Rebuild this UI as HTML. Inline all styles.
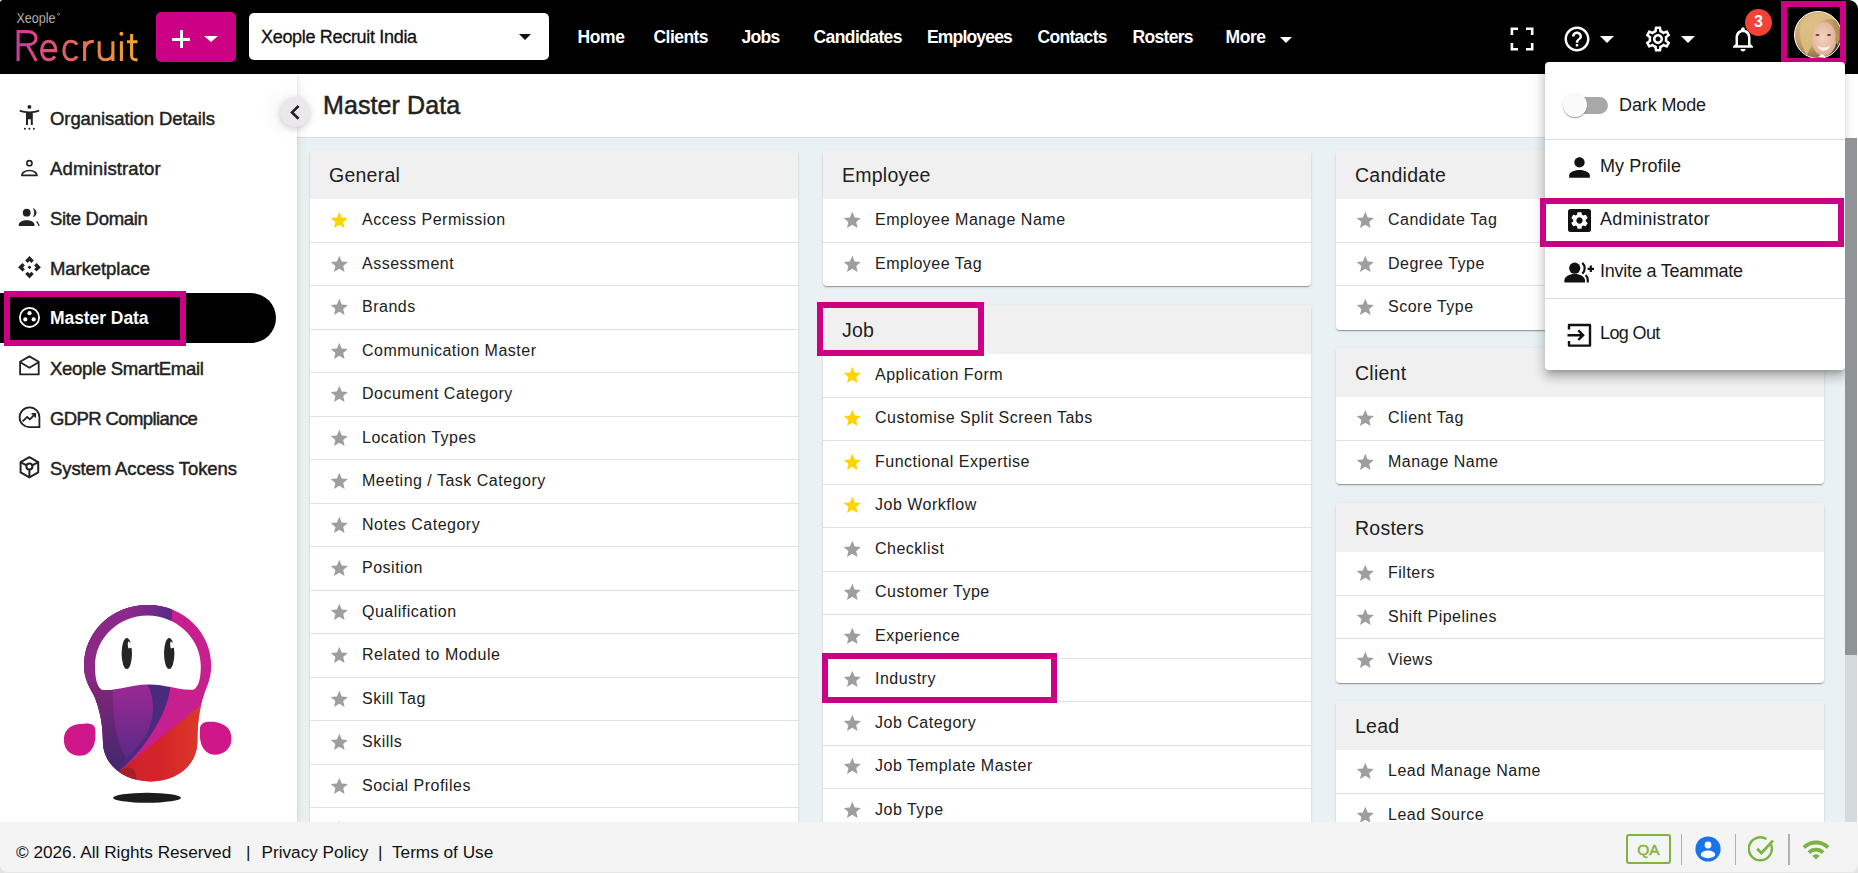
<!DOCTYPE html>
<html><head><meta charset="utf-8">
<style>
*{box-sizing:border-box}
html,body{margin:0;padding:0}
body{width:1858px;height:873px;overflow:hidden;position:relative;background:#fff;font-family:"Liberation Sans",sans-serif;color:#212121}
.a{position:absolute}
.t{position:absolute;white-space:nowrap}
#hdr{left:0;top:0;width:1858px;height:74px;background:#000;border-radius:3px 9px 0 0}
.nav{position:absolute;top:29px;line-height:17.5px;font-size:17.5px;font-weight:700;color:#fff;white-space:nowrap}
.tri{position:absolute;width:0;height:0;border-left:7px solid transparent;border-right:7px solid transparent;border-top:7px solid #fff}
#side{left:0;top:74px;width:297px;height:748px;background:#fff}
.si{position:absolute;left:50px;font-size:18.5px;line-height:18.5px;color:#222;white-space:nowrap;-webkit-text-stroke:0.45px #222}
.sic{position:absolute;left:17px;width:24px;height:24px}
#content{left:297px;top:74px;width:1548px;height:748px;background:#e9f1f5}
#title{left:297px;top:74px;width:1548px;height:64px;background:#fff;border-bottom:1px solid #d6dde3}
.card{position:absolute;background:#fff;border-radius:4px;overflow:hidden;box-shadow:0 2px 1px -1px rgba(0,0,0,.2),0 1px 1px 0 rgba(0,0,0,.14),0 1px 3px 0 rgba(0,0,0,.12)}
.ch{position:absolute;left:0;top:0;width:100%;height:49px;background:#f0f0f0;padding-left:19px;font-size:19.5px;line-height:51px;color:#212121;letter-spacing:0.25px}
.row{position:absolute;left:0;width:100%;height:43.5px}
.star{position:absolute;left:19px;top:11px;width:20.6px;height:20.6px}
.dv{position:absolute;left:0;top:-0.75px;width:100%;height:1px;background:#e0e0e0}
.rt{position:absolute;left:52px;top:1px;line-height:40px;font-size:16px;letter-spacing:0.5px;color:#212121;white-space:nowrap}
#foot{left:0;top:822px;width:1858px;height:51px;background:#f4f4f4;border-radius:0 0 8px 8px}
.ft{position:absolute;top:844px;font-size:17.2px;line-height:17.2px;color:#111;white-space:nowrap}
#menu{left:1545px;top:62px;width:300px;height:308px;background:#fff;border-radius:4px;box-shadow:0 5px 5px -3px rgba(0,0,0,.2),0 8px 10px 1px rgba(0,0,0,.14),0 3px 14px 2px rgba(0,0,0,.12)}
.mi{position:absolute;font-size:18px;line-height:18px;color:#1a1a1a;white-space:nowrap}
.pink{position:absolute;border:6px solid #cc0085}
</style></head><body>

<!-- content area -->
<div id="content" class="a"></div>
<div id="title" class="a"></div>
<div class="t" style="left:323px;top:92.9px;font-size:25px;line-height:25px;color:#222;-webkit-text-stroke:0.5px #222;letter-spacing:0.1px">Master Data</div>

<div class="card" style="left:310px;top:150px;width:488px;height:701.5px"><div class="ch">General</div><div class="row" style="top:49.0px"><svg class="star" viewBox="0 0 24 24"><path fill="#ffd400" d="M12 17.27L18.18 21l-1.64-7.03L22 9.24l-7.19-.61L12 2 9.19 8.63 2 9.24l5.46 4.73L5.82 21z"/></svg><span class="rt">Access Permission</span></div><div class="row" style="top:92.5px"><div class="dv"></div><svg class="star" viewBox="0 0 24 24"><path fill="#9e9e9e" d="M12 17.27L18.18 21l-1.64-7.03L22 9.24l-7.19-.61L12 2 9.19 8.63 2 9.24l5.46 4.73L5.82 21z"/></svg><span class="rt">Assessment</span></div><div class="row" style="top:136.0px"><div class="dv"></div><svg class="star" viewBox="0 0 24 24"><path fill="#9e9e9e" d="M12 17.27L18.18 21l-1.64-7.03L22 9.24l-7.19-.61L12 2 9.19 8.63 2 9.24l5.46 4.73L5.82 21z"/></svg><span class="rt">Brands</span></div><div class="row" style="top:179.5px"><div class="dv"></div><svg class="star" viewBox="0 0 24 24"><path fill="#9e9e9e" d="M12 17.27L18.18 21l-1.64-7.03L22 9.24l-7.19-.61L12 2 9.19 8.63 2 9.24l5.46 4.73L5.82 21z"/></svg><span class="rt">Communication Master</span></div><div class="row" style="top:223.0px"><div class="dv"></div><svg class="star" viewBox="0 0 24 24"><path fill="#9e9e9e" d="M12 17.27L18.18 21l-1.64-7.03L22 9.24l-7.19-.61L12 2 9.19 8.63 2 9.24l5.46 4.73L5.82 21z"/></svg><span class="rt">Document Category</span></div><div class="row" style="top:266.5px"><div class="dv"></div><svg class="star" viewBox="0 0 24 24"><path fill="#9e9e9e" d="M12 17.27L18.18 21l-1.64-7.03L22 9.24l-7.19-.61L12 2 9.19 8.63 2 9.24l5.46 4.73L5.82 21z"/></svg><span class="rt">Location Types</span></div><div class="row" style="top:310.0px"><div class="dv"></div><svg class="star" viewBox="0 0 24 24"><path fill="#9e9e9e" d="M12 17.27L18.18 21l-1.64-7.03L22 9.24l-7.19-.61L12 2 9.19 8.63 2 9.24l5.46 4.73L5.82 21z"/></svg><span class="rt">Meeting / Task Category</span></div><div class="row" style="top:353.5px"><div class="dv"></div><svg class="star" viewBox="0 0 24 24"><path fill="#9e9e9e" d="M12 17.27L18.18 21l-1.64-7.03L22 9.24l-7.19-.61L12 2 9.19 8.63 2 9.24l5.46 4.73L5.82 21z"/></svg><span class="rt">Notes Category</span></div><div class="row" style="top:397.0px"><div class="dv"></div><svg class="star" viewBox="0 0 24 24"><path fill="#9e9e9e" d="M12 17.27L18.18 21l-1.64-7.03L22 9.24l-7.19-.61L12 2 9.19 8.63 2 9.24l5.46 4.73L5.82 21z"/></svg><span class="rt">Position</span></div><div class="row" style="top:440.5px"><div class="dv"></div><svg class="star" viewBox="0 0 24 24"><path fill="#9e9e9e" d="M12 17.27L18.18 21l-1.64-7.03L22 9.24l-7.19-.61L12 2 9.19 8.63 2 9.24l5.46 4.73L5.82 21z"/></svg><span class="rt">Qualification</span></div><div class="row" style="top:484.0px"><div class="dv"></div><svg class="star" viewBox="0 0 24 24"><path fill="#9e9e9e" d="M12 17.27L18.18 21l-1.64-7.03L22 9.24l-7.19-.61L12 2 9.19 8.63 2 9.24l5.46 4.73L5.82 21z"/></svg><span class="rt">Related to Module</span></div><div class="row" style="top:527.5px"><div class="dv"></div><svg class="star" viewBox="0 0 24 24"><path fill="#9e9e9e" d="M12 17.27L18.18 21l-1.64-7.03L22 9.24l-7.19-.61L12 2 9.19 8.63 2 9.24l5.46 4.73L5.82 21z"/></svg><span class="rt">Skill Tag</span></div><div class="row" style="top:571.0px"><div class="dv"></div><svg class="star" viewBox="0 0 24 24"><path fill="#9e9e9e" d="M12 17.27L18.18 21l-1.64-7.03L22 9.24l-7.19-.61L12 2 9.19 8.63 2 9.24l5.46 4.73L5.82 21z"/></svg><span class="rt">Skills</span></div><div class="row" style="top:614.5px"><div class="dv"></div><svg class="star" viewBox="0 0 24 24"><path fill="#9e9e9e" d="M12 17.27L18.18 21l-1.64-7.03L22 9.24l-7.19-.61L12 2 9.19 8.63 2 9.24l5.46 4.73L5.82 21z"/></svg><span class="rt">Social Profiles</span></div><div class="row" style="top:658.0px"><div class="dv"></div><svg class="star" viewBox="0 0 24 24"><path fill="#9e9e9e" d="M12 17.27L18.18 21l-1.64-7.03L22 9.24l-7.19-.61L12 2 9.19 8.63 2 9.24l5.46 4.73L5.82 21z"/></svg><span class="rt">Source</span></div></div><div class="card" style="left:823px;top:150px;width:488px;height:136.0px"><div class="ch">Employee</div><div class="row" style="top:49.0px"><svg class="star" viewBox="0 0 24 24"><path fill="#9e9e9e" d="M12 17.27L18.18 21l-1.64-7.03L22 9.24l-7.19-.61L12 2 9.19 8.63 2 9.24l5.46 4.73L5.82 21z"/></svg><span class="rt">Employee Manage Name</span></div><div class="row" style="top:92.5px"><div class="dv"></div><svg class="star" viewBox="0 0 24 24"><path fill="#9e9e9e" d="M12 17.27L18.18 21l-1.64-7.03L22 9.24l-7.19-.61L12 2 9.19 8.63 2 9.24l5.46 4.73L5.82 21z"/></svg><span class="rt">Employee Tag</span></div></div><div class="card" style="left:823px;top:304.75px;width:488px;height:571.0px"><div class="ch">Job</div><div class="row" style="top:49.0px"><svg class="star" viewBox="0 0 24 24"><path fill="#ffd400" d="M12 17.27L18.18 21l-1.64-7.03L22 9.24l-7.19-.61L12 2 9.19 8.63 2 9.24l5.46 4.73L5.82 21z"/></svg><span class="rt">Application Form</span></div><div class="row" style="top:92.5px"><div class="dv"></div><svg class="star" viewBox="0 0 24 24"><path fill="#ffd400" d="M12 17.27L18.18 21l-1.64-7.03L22 9.24l-7.19-.61L12 2 9.19 8.63 2 9.24l5.46 4.73L5.82 21z"/></svg><span class="rt">Customise Split Screen Tabs</span></div><div class="row" style="top:136.0px"><div class="dv"></div><svg class="star" viewBox="0 0 24 24"><path fill="#ffd400" d="M12 17.27L18.18 21l-1.64-7.03L22 9.24l-7.19-.61L12 2 9.19 8.63 2 9.24l5.46 4.73L5.82 21z"/></svg><span class="rt">Functional Expertise</span></div><div class="row" style="top:179.5px"><div class="dv"></div><svg class="star" viewBox="0 0 24 24"><path fill="#ffd400" d="M12 17.27L18.18 21l-1.64-7.03L22 9.24l-7.19-.61L12 2 9.19 8.63 2 9.24l5.46 4.73L5.82 21z"/></svg><span class="rt">Job Workflow</span></div><div class="row" style="top:223.0px"><div class="dv"></div><svg class="star" viewBox="0 0 24 24"><path fill="#9e9e9e" d="M12 17.27L18.18 21l-1.64-7.03L22 9.24l-7.19-.61L12 2 9.19 8.63 2 9.24l5.46 4.73L5.82 21z"/></svg><span class="rt">Checklist</span></div><div class="row" style="top:266.5px"><div class="dv"></div><svg class="star" viewBox="0 0 24 24"><path fill="#9e9e9e" d="M12 17.27L18.18 21l-1.64-7.03L22 9.24l-7.19-.61L12 2 9.19 8.63 2 9.24l5.46 4.73L5.82 21z"/></svg><span class="rt">Customer Type</span></div><div class="row" style="top:310.0px"><div class="dv"></div><svg class="star" viewBox="0 0 24 24"><path fill="#9e9e9e" d="M12 17.27L18.18 21l-1.64-7.03L22 9.24l-7.19-.61L12 2 9.19 8.63 2 9.24l5.46 4.73L5.82 21z"/></svg><span class="rt">Experience</span></div><div class="row" style="top:353.5px"><div class="dv"></div><svg class="star" viewBox="0 0 24 24"><path fill="#9e9e9e" d="M12 17.27L18.18 21l-1.64-7.03L22 9.24l-7.19-.61L12 2 9.19 8.63 2 9.24l5.46 4.73L5.82 21z"/></svg><span class="rt">Industry</span></div><div class="row" style="top:397.0px"><div class="dv"></div><svg class="star" viewBox="0 0 24 24"><path fill="#9e9e9e" d="M12 17.27L18.18 21l-1.64-7.03L22 9.24l-7.19-.61L12 2 9.19 8.63 2 9.24l5.46 4.73L5.82 21z"/></svg><span class="rt">Job Category</span></div><div class="row" style="top:440.5px"><div class="dv"></div><svg class="star" viewBox="0 0 24 24"><path fill="#9e9e9e" d="M12 17.27L18.18 21l-1.64-7.03L22 9.24l-7.19-.61L12 2 9.19 8.63 2 9.24l5.46 4.73L5.82 21z"/></svg><span class="rt">Job Template Master</span></div><div class="row" style="top:484.0px"><div class="dv"></div><svg class="star" viewBox="0 0 24 24"><path fill="#9e9e9e" d="M12 17.27L18.18 21l-1.64-7.03L22 9.24l-7.19-.61L12 2 9.19 8.63 2 9.24l5.46 4.73L5.82 21z"/></svg><span class="rt">Job Type</span></div><div class="row" style="top:527.5px"><div class="dv"></div><svg class="star" viewBox="0 0 24 24"><path fill="#9e9e9e" d="M12 17.27L18.18 21l-1.64-7.03L22 9.24l-7.19-.61L12 2 9.19 8.63 2 9.24l5.46 4.73L5.82 21z"/></svg><span class="rt">Rejection Reason</span></div></div><div class="card" style="left:1336px;top:150px;width:488px;height:179.5px"><div class="ch">Candidate</div><div class="row" style="top:49.0px"><svg class="star" viewBox="0 0 24 24"><path fill="#9e9e9e" d="M12 17.27L18.18 21l-1.64-7.03L22 9.24l-7.19-.61L12 2 9.19 8.63 2 9.24l5.46 4.73L5.82 21z"/></svg><span class="rt">Candidate Tag</span></div><div class="row" style="top:92.5px"><div class="dv"></div><svg class="star" viewBox="0 0 24 24"><path fill="#9e9e9e" d="M12 17.27L18.18 21l-1.64-7.03L22 9.24l-7.19-.61L12 2 9.19 8.63 2 9.24l5.46 4.73L5.82 21z"/></svg><span class="rt">Degree Type</span></div><div class="row" style="top:136.0px"><div class="dv"></div><svg class="star" viewBox="0 0 24 24"><path fill="#9e9e9e" d="M12 17.27L18.18 21l-1.64-7.03L22 9.24l-7.19-.61L12 2 9.19 8.63 2 9.24l5.46 4.73L5.82 21z"/></svg><span class="rt">Score Type</span></div></div><div class="card" style="left:1336px;top:348.25px;width:488px;height:136.0px"><div class="ch">Client</div><div class="row" style="top:49.0px"><svg class="star" viewBox="0 0 24 24"><path fill="#9e9e9e" d="M12 17.27L18.18 21l-1.64-7.03L22 9.24l-7.19-.61L12 2 9.19 8.63 2 9.24l5.46 4.73L5.82 21z"/></svg><span class="rt">Client Tag</span></div><div class="row" style="top:92.5px"><div class="dv"></div><svg class="star" viewBox="0 0 24 24"><path fill="#9e9e9e" d="M12 17.27L18.18 21l-1.64-7.03L22 9.24l-7.19-.61L12 2 9.19 8.63 2 9.24l5.46 4.73L5.82 21z"/></svg><span class="rt">Manage Name</span></div></div><div class="card" style="left:1336px;top:503.0px;width:488px;height:179.5px"><div class="ch">Rosters</div><div class="row" style="top:49.0px"><svg class="star" viewBox="0 0 24 24"><path fill="#9e9e9e" d="M12 17.27L18.18 21l-1.64-7.03L22 9.24l-7.19-.61L12 2 9.19 8.63 2 9.24l5.46 4.73L5.82 21z"/></svg><span class="rt">Filters</span></div><div class="row" style="top:92.5px"><div class="dv"></div><svg class="star" viewBox="0 0 24 24"><path fill="#9e9e9e" d="M12 17.27L18.18 21l-1.64-7.03L22 9.24l-7.19-.61L12 2 9.19 8.63 2 9.24l5.46 4.73L5.82 21z"/></svg><span class="rt">Shift Pipelines</span></div><div class="row" style="top:136.0px"><div class="dv"></div><svg class="star" viewBox="0 0 24 24"><path fill="#9e9e9e" d="M12 17.27L18.18 21l-1.64-7.03L22 9.24l-7.19-.61L12 2 9.19 8.63 2 9.24l5.46 4.73L5.82 21z"/></svg><span class="rt">Views</span></div></div><div class="card" style="left:1336px;top:701.25px;width:488px;height:179.5px"><div class="ch">Lead</div><div class="row" style="top:49.0px"><svg class="star" viewBox="0 0 24 24"><path fill="#9e9e9e" d="M12 17.27L18.18 21l-1.64-7.03L22 9.24l-7.19-.61L12 2 9.19 8.63 2 9.24l5.46 4.73L5.82 21z"/></svg><span class="rt">Lead Manage Name</span></div><div class="row" style="top:92.5px"><div class="dv"></div><svg class="star" viewBox="0 0 24 24"><path fill="#9e9e9e" d="M12 17.27L18.18 21l-1.64-7.03L22 9.24l-7.19-.61L12 2 9.19 8.63 2 9.24l5.46 4.73L5.82 21z"/></svg><span class="rt">Lead Source</span></div><div class="row" style="top:136.0px"><div class="dv"></div><svg class="star" viewBox="0 0 24 24"><path fill="#9e9e9e" d="M12 17.27L18.18 21l-1.64-7.03L22 9.24l-7.19-.61L12 2 9.19 8.63 2 9.24l5.46 4.73L5.82 21z"/></svg><span class="rt">Lead Status</span></div></div>
<div class="pink" style="left:817px;top:302px;width:167px;height:54px"></div>
<div class="pink" style="left:822px;top:653px;width:235px;height:50px"></div>

<!-- sidebar -->
<div id="side" class="a" style="box-shadow:1px 0 3px rgba(0,0,0,.07),3px 0 10px rgba(0,0,0,.05)"></div>
<!-- collapse button -->
<div class="a" style="left:280px;top:97px;width:30px;height:30px;border-radius:50%;background:#ebe8ec;box-shadow:0 2px 6px rgba(0,0,0,.18),-6px 0 22px rgba(0,0,0,.06)"></div>
<svg class="a" style="left:280px;top:97px" width="30" height="30" viewBox="0 0 30 30"><path d="M18.6 9L12 15.4l6.6 6.4" fill="none" stroke="#222" stroke-width="2.6"/></svg>

<div class="si" style="top:109.5px;letter-spacing:-0.08px">Organisation Details</div>
<div class="si" style="top:159.5px;letter-spacing:0.14px">Administrator</div>
<div class="si" style="top:209.5px;letter-spacing:-0.288px">Site Domain</div>
<div class="si" style="top:259.5px;letter-spacing:-0.07px">Marketplace</div>
<div class="a" style="left:0;top:293px;width:276px;height:50px;background:#000;border-radius:0 25px 25px 0"></div>
<div class="si" style="top:310px;color:#fff;font-weight:700;font-size:17.5px;line-height:17.5px;-webkit-text-stroke:0;letter-spacing:-0.065px">Master Data</div>
<div class="si" style="top:359.5px;letter-spacing:-0.279px">Xeople SmartEmail</div>
<div class="si" style="top:409.5px;letter-spacing:-0.599px">GDPR Compliance</div>
<div class="si" style="top:459.5px;letter-spacing:-0.098px">System Access Tokens</div>
<div class="pink" style="left:4px;top:291px;width:182px;height:55px"></div>

<!-- mascot -->
<svg class="a" style="left:50px;top:590px" width="200" height="222" viewBox="0 0 200 222">
<defs>
<clipPath id="bc"><path d="M97.7 15.1C134 15.1 161.2 43 161.2 75.6C161.2 90 156 98 153.7 105.8C149 120 147.4 135 147.4 151.1C147.4 176 126 191.4 100.8 191.4C74 191.4 52.9 175 52.9 151.1C52.9 135 50 120 44.1 105.8C40 98 34 90 34 75.6C34 43 61 15.1 97.7 15.1Z"/></clipPath>
<linearGradient id="pg" x1="0" y1="0" x2="1" y2="0.3"><stop offset="0" stop-color="#8c2580"/><stop offset="0.6" stop-color="#8a2a8c"/><stop offset="1" stop-color="#5a2a88"/></linearGradient>
<linearGradient id="lfg" x1="0" y1="0" x2="0" y2="1"><stop offset="0" stop-color="#84267a"/><stop offset="1" stop-color="#34286a"/></linearGradient>
<linearGradient id="lng" x1="0" y1="0" x2="0" y2="1"><stop offset="0" stop-color="#9e2892"/><stop offset="1" stop-color="#5a2a88"/></linearGradient>
<linearGradient id="rg" x1="0" y1="0" x2="1" y2="0"><stop offset="0" stop-color="#c4202a"/><stop offset="0.5" stop-color="#d5242a"/><stop offset="1" stop-color="#e04a26"/></linearGradient>
</defs>
<g clip-path="url(#bc)">
<rect x="0" y="0" width="200" height="200" fill="#c71f8d"/>
<path d="M20 0H122.6C121 40 120 70 120 100C116 125 95 160 68.4 181.7L20 200Z" fill="#4a2a7e"/>
<path d="M20 0H122.6C121 40 120 70 120 93H20Z" fill="url(#pg)"/>
<path d="M20 92H65C62 130 66 150 76.2 166L68.4 181.7L20 200Z" fill="url(#lfg)"/>
<path d="M63 92H96C101 100 103 108 103 120C102 140 92 155 76.2 168C66 150 62 130 63 92Z" fill="url(#lng)"/>
<path d="M60 188.5L170 99.7H180V210H40Z" fill="url(#rg)"/>
<path d="M68.4 181.7C78 174 85 178 86 186C87 192 85 195 80 196L60 196Z" fill="#a81e28"/>
</g>
<path d="M97.5 25.6C126 25.6 150.8 48 150.8 76C150.8 88 149 96 144 99.5C130 101 115 94 98 94.5C80 95 66 101 52 100C47 97 45 88 45 76C45 48 69 25.6 97.5 25.6Z" fill="#fff"/>
<ellipse cx="76.8" cy="63.5" rx="5.2" ry="15.4" fill="#252525"/>
<ellipse cx="119.2" cy="63.5" rx="5.2" ry="15.4" fill="#252525"/>
<path d="M78.2 51.6C80.6 52.2 82.2 54.4 82.2 57.4L78.4 58.6C77.6 56 77.6 53.6 78.2 51.6Z" fill="#fff"/>
<path d="M120.6 51.6C123 52.2 124.6 54.4 124.6 57.4L120.8 58.6C120 56 120 53.6 120.6 51.6Z" fill="#fff"/>
<path d="M14 152C13 140 20 135 30 134C38 133 45 133 45.3 140C46 150 45 160 35 165C24 168 15 162 14 152Z" fill="#d0178a"/>
<path d="M181.4 150C182 138 175 134 165 132C157 131 150 132 149.9 139C149.5 149 150 159 160 164C171 167 181 160 181.4 150Z" fill="#d0178a"/>
<ellipse cx="97" cy="207.8" rx="34" ry="5" fill="#1c1c1c"/>
</svg>

<!-- sidebar icons -->
<svg class="a" style="left:17px;top:104px" width="25" height="28" viewBox="0 0 25 28" fill="#222">
<circle cx="12.4" cy="2.9" r="1.9"/>
<path d="M3 5.8c3 1.2 5.8 1.6 9.4 1.6s6.4-.4 9.4-1.6l.6 1.6c-2.2.9-4.4 1.4-6.6 1.6V21h-2V15.3h-2.8V21h-2V9c-2.2-.2-4.4-.7-6.6-1.6z"/>
<circle cx="7.9" cy="24.7" r="1"/><circle cx="12.4" cy="24.7" r="1"/><circle cx="16.9" cy="24.7" r="1"/>
</svg>
<svg class="a" style="left:17px;top:156px" width="25" height="24" viewBox="0 0 25 24" fill="none" stroke="#222" stroke-width="1.6">
<circle cx="12.4" cy="7.2" r="2.6"/>
<path d="M4.8 19.4c0-2.6 3.4-4.9 7.6-4.9s7.6 2.3 7.6 4.9z"/>
</svg>
<svg class="a" style="left:17px;top:204px" width="25" height="24" viewBox="0 0 25 24" fill="#222">
<circle cx="9.7" cy="8.7" r="3.9"/>
<path d="M1.8 21.9v-1.4c0-2.4 3.6-4.3 7.9-4.3s7.7 1.9 7.7 4.3v1.4z"/>
<path d="M16.6 4.6c1.5 1 2.5 2.5 2.5 4.1s-1 3.1-2.5 4.1c.6-1.2.9-2.6.9-4.1s-.3-2.9-.9-4.1z" fill="#222" stroke="#222" stroke-width="0.8"/>
<path d="M19.7 17.4l2.6 4.5" stroke="#222" stroke-width="1.2" fill="none"/>
</svg>
<svg class="a" style="left:17px;top:255px" width="25" height="25" viewBox="0 0 25 25" fill="#222">
<path d="M12.5 1.1L16.8 5.5L14.4 7.9L12.5 6L10.6 7.9L8.2 5.5Z M12.5 23.5L16.8 19.1L14.4 16.7L12.5 18.6L10.6 16.7L8.2 19.1Z M1.1 12.3L5.5 8L7.9 10.4L6 12.3L7.9 14.2L5.5 16.6Z M23.9 12.3L19.5 8L17.1 10.4L19 12.3L17.1 14.2L19.5 16.6Z M12.5 10.4L14.4 12.3L12.5 14.2L10.6 12.3Z"/>
</svg>
<svg class="a" style="left:17px;top:305px" width="25" height="25" viewBox="0 0 25 25">
<circle cx="12.5" cy="12.4" r="9.6" fill="none" stroke="#fff" stroke-width="1.8"/>
<circle cx="12.5" cy="8.2" r="2.1" fill="#fff"/><circle cx="8.3" cy="14.4" r="2.1" fill="#fff"/><circle cx="16.7" cy="14.4" r="2.1" fill="#fff"/>
</svg>
<svg class="a" style="left:17px;top:354px" width="25" height="24" viewBox="0 0 25 24" fill="none" stroke="#222" stroke-width="1.8" stroke-linejoin="round">
<path d="M3.1 7.7L12.4 2.4l9.3 5.3v12.7H3.1z"/><path d="M3.3 8.2l9.1 5.6 9.1-5.6"/>
</svg>
<svg class="a" style="left:17px;top:405px" width="25" height="25" viewBox="0 0 25 25" fill="none" stroke="#222" stroke-width="1.8">
<path d="M22.4 22.2h-9.6a9.9 9.9 0 1 1 9.6-9.6z"/>
<path d="M5.6 16.3l4.6-4.4 2.6 2.4 5.2-5.2" stroke-linejoin="round"/><path d="M14.6 8.8h3.6v3.6"/>
</svg>
<svg class="a" style="left:17px;top:455px" width="25" height="25" viewBox="0 0 25 25" fill="none" stroke="#222" stroke-width="2" stroke-linejoin="round">
<path d="M12.4 2.2l8.8 5v10.2l-8.8 5-8.8-5V7.2z"/>
<circle cx="12.4" cy="11.6" r="3"/><path d="M3.8 7.4l5.9 3M21 7.4l-5.9 3M12.4 14.6v7.4"/>
</svg>

<!-- header -->
<div id="hdr" class="a"></div>
<svg class="a" style="left:0;top:0" width="150" height="74" viewBox="0 0 150 74">
<defs><linearGradient id="lg" x1="16" y1="0" x2="138" y2="0" gradientUnits="userSpaceOnUse">
<stop offset="0" stop-color="#cf3a9c"/><stop offset="0.45" stop-color="#e2605f"/><stop offset="1" stop-color="#f3a928"/></linearGradient></defs>
<text x="16.5" y="23" font-family="Liberation Sans" font-size="14" fill="#d8d8d8" stroke="#000" stroke-width="0.25" textLength="39" lengthAdjust="spacingAndGlyphs">Xeople</text>
<circle cx="58.6" cy="14.2" r="1.1" fill="none" stroke="#cfcfcf" stroke-width="0.5"/>
<g fill="none" stroke="url(#lg)" stroke-width="3.1">
<path d="M18.1 61V31.6H27C33.3 31.6 36 34.6 36 38.2C36 41.8 33.3 44.8 27 44.8H18.1M27.3 44.8L36.4 61"/>
<path d="M41.6 50.6H55.8C55.8 45 52.6 41.2 48.7 41.2C44.7 41.2 41.6 45.2 41.6 50.6C41.6 56 44.7 59.8 48.8 59.8C51.4 59.8 53.5 58.6 55 56.4"/>
<path d="M77.2 44.6C75.7 42.4 73.4 41.2 70.7 41.2C66.6 41.2 63.9 45.2 63.9 50.5C63.9 55.8 66.6 59.8 70.7 59.8C73.4 59.8 75.7 58.6 77.2 56.4"/>
<path d="M84.6 61V41.2M84.6 48.5C85.5 43.8 88.5 41.4 93.8 41.4"/>
<path d="M99.2 41.2V53C99.2 57.4 101.6 59.8 105.6 59.8C109.6 59.8 112.9 57.2 112.9 52.6M112.9 41.2V61"/>
<path d="M121.4 41.2V61"/>
<path d="M131.6 34V55.5C131.6 59 133 59.9 137.5 59.9M127 41.8H137.5"/>
</g>
<circle cx="121.4" cy="33.7" r="2" fill="#f0a030"/>
</svg>
<div class="a" style="left:156px;top:12px;width:80px;height:50px;background:#cc0085;border-radius:5px"></div>
<div class="a" style="left:172px;top:37.5px;width:18px;height:3px;background:#fff"></div>
<div class="a" style="left:179.5px;top:30px;width:3px;height:18px;background:#fff"></div>
<div class="tri" style="left:204px;top:36px;border-left-width:7px;border-right-width:7px;border-top-width:6.5px"></div>
<div class="a" style="left:249px;top:13px;width:300px;height:47px;background:#fff;border-radius:5px"></div>
<div class="t" style="left:261px;top:27.6px;font-size:18px;line-height:18px;color:#111;-webkit-text-stroke:0.3px #111;letter-spacing:-0.315px">Xeople Recruit India</div>
<div class="tri" style="left:519px;top:34px;border-left-width:6px;border-right-width:6px;border-top-width:6px;border-top-color:#111"></div>
<div class="nav" style="left:577.5px;letter-spacing:-0.406px">Home</div>
<div class="nav" style="left:653.5px;letter-spacing:-0.551px">Clients</div>
<div class="nav" style="left:741.5px;letter-spacing:-0.715px">Jobs</div>
<div class="nav" style="left:813.5px;letter-spacing:-0.593px">Candidates</div>
<div class="nav" style="left:927px;letter-spacing:-0.823px">Employees</div>
<div class="nav" style="left:1037.5px;letter-spacing:-0.697px">Contacts</div>
<div class="nav" style="left:1132.5px;letter-spacing:-0.682px">Rosters</div>
<div class="nav" style="left:1225.5px;letter-spacing:-0.428px">More</div>
<div class="tri" style="left:1280px;top:36.5px;border-left-width:6.5px;border-right-width:6.5px;border-top-width:6.5px"></div>
<!-- fullscreen -->
<svg class="a" style="left:1508px;top:25px" width="28" height="28" viewBox="0 0 28 28" fill="none" stroke="#fff" stroke-width="2.6">
<path d="M3.9 10V3.8H10M18 3.8H24.2V10M24.2 18V24.2H18M10 24.2H3.9V18"/></svg>
<!-- help -->
<svg class="a" style="left:1562px;top:23.8px" width="30" height="30" viewBox="0 0 24 24"><path fill="#fff" d="M11 18h2v-2h-2v2zm1-16C6.48 2 2 6.48 2 12s4.48 10 10 10 10-4.48 10-10S17.52 2 12 2zm0 18c-4.41 0-8-3.59-8-8s3.59-8 8-8 8 3.59 8 8-3.59 8-8 8zm0-14c-2.21 0-4 1.79-4 4h2c0-1.1.9-2 2-2s2 .9 2 2c0 2-3 1.75-3 5h2c0-2.25 3-2.5 3-5 0-2.21-1.79-4-4-4z"/></svg>
<div class="tri" style="left:1600px;top:36px"></div>
<!-- gear -->
<svg class="a" style="left:1643px;top:23.8px" width="30" height="30" viewBox="0 0 24 24"><path fill="#fff" d="M19.43 12.98c.04-.32.07-.64.07-.98 0-.34-.03-.66-.07-.98l2.11-1.65c.19-.15.24-.42.12-.64l-2-3.46c-.09-.16-.26-.25-.44-.25-.06 0-.12.01-.17.03l-2.49 1c-.52-.4-1.08-.73-1.69-.98l-.38-2.65C14.46 2.18 14.25 2 14 2h-4c-.25 0-.46.18-.49.42l-.38 2.65c-.61.25-1.17.59-1.69.98l-2.49-1c-.06-.02-.12-.03-.18-.03-.17 0-.34.09-.43.25l-2 3.46c-.13.22-.07.49.12.64l2.11 1.65c-.04.32-.07.65-.07.98 0 .33.03.66.07.98l-2.11 1.65c-.19.15-.24.42-.12.64l2 3.46c.09.16.26.25.44.25.06 0 .12-.01.17-.03l2.49-1c.52.4 1.08.73 1.69.98l.38 2.65c.03.24.24.42.49.42h4c.25 0 .46-.18.49-.42l.38-2.65c.61-.25 1.17-.59 1.69-.98l2.49 1c.06.02.12.03.18.03.17 0 .34-.09.43-.25l2-3.46c.12-.22.07-.49-.12-.64l-2.11-1.65zm-1.98-1.71c.04.31.05.52.05.73 0 .21-.02.43-.05.73l-.14 1.13.89.7 1.08.84-.7 1.21-1.27-.51-1.04-.42-.9.68c-.43.32-.84.56-1.25.73l-1.06.43-.16 1.13-.2 1.35h-1.4l-.19-1.35-.16-1.13-1.06-.43c-.43-.18-.83-.41-1.23-.71l-.91-.7-1.06.43-1.27.51-.7-1.21 1.08-.84.89-.7-.14-1.13c-.03-.31-.05-.54-.05-.74s.02-.43.05-.73l.14-1.13-.89-.7-1.08-.84.7-1.21 1.27.51 1.04.42.9-.68c.43-.32.84-.56 1.25-.73l1.06-.43.16-1.13.2-1.35h1.39l.19 1.35.16 1.13 1.06.43c.43.18.83.41 1.23.71l.91.7 1.06-.43 1.27-.51.7 1.21-1.07.85-.89.7.14 1.13zM12 8c-2.21 0-4 1.79-4 4s1.79 4 4 4 4-1.79 4-4-1.79-4-4-4zm0 6c-1.1 0-2-.9-2-2s.9-2 2-2 2 .9 2 2-.9 2-2 2z"/></svg>
<div class="tri" style="left:1681px;top:36px"></div>
<!-- bell -->
<svg class="a" style="left:1728px;top:23.8px" width="30" height="30" viewBox="0 0 24 24"><path fill="#fff" d="M12 22c1.1 0 2-.9 2-2h-4c0 1.1.89 2 2 2zm6-6v-5c0-3.07-1.64-5.64-4.5-6.32V4c0-.83-.67-1.5-1.5-1.5s-1.5.67-1.5 1.5v.68C7.63 5.36 6 7.92 6 11v5l-2 2v1h16v-1l-2-2zm-2 1H8v-6c0-2.48 1.51-4.5 4-4.5s4 2.02 4 4.5v6z"/></svg>
<div class="a" style="left:1745px;top:9px;width:27px;height:27px;border-radius:50%;background:#f44336"></div>
<div class="t" style="left:1745px;top:13.6px;width:27px;text-align:center;font-size:16px;line-height:16px;font-weight:700;color:#fff">3</div>
<!-- avatar -->
<div class="a" style="left:1787px;top:7px;width:53px;height:51px;overflow:hidden">
<svg class="a" style="left:7px;top:3.6px" width="48" height="48" viewBox="0 0 48 48">
<defs><clipPath id="avc"><circle cx="24" cy="24" r="23.5"/></clipPath>
<radialGradient id="hair" cx="0.35" cy="0.3" r="0.8"><stop offset="0" stop-color="#e0c48e"/><stop offset="0.5" stop-color="#c9a267"/><stop offset="1" stop-color="#7d6440"/></radialGradient>
<radialGradient id="skin" cx="0.45" cy="0.45" r="0.6"><stop offset="0" stop-color="#f2d2c0"/><stop offset="0.7" stop-color="#e6b9a0"/><stop offset="1" stop-color="#d9a88a"/></radialGradient></defs>
<g clip-path="url(#avc)">
<rect width="48" height="48" fill="url(#hair)"/>
<path d="M38 36L48 28V48H34z" fill="#3e3e36"/>
<ellipse cx="30" cy="28" rx="12.5" ry="17" fill="url(#skin)"/>
<path d="M8 10C16 0 34 -1 44 10C40 8 32 6 25 12C19 17 17.5 26 18 34L13 44C6 34 4 20 8 10z" fill="#dcbf82" opacity="0.85"/>
<path d="M41 12C45 18 46 26 44 34L41 30C42 24 42 18 41 12z" fill="#b8925a"/>
<ellipse cx="23.5" cy="24" rx="2" ry="1.1" fill="#5a4034"/>
<ellipse cx="35" cy="24" rx="2" ry="1.1" fill="#5a4034"/>
<path d="M23.5 34.5c3.5 2.5 9 2.5 12.5 0c-1.2 4-3.8 5.2-6.2 5.2s-5-1.2-6.3-5.2z" fill="#f6f0ea"/>
<path d="M24 46L28 43L32 46z" fill="#fff"/>
</g>
<circle cx="24" cy="24" r="23.5" fill="none" stroke="#fff" stroke-width="1"/>
</svg></div>
<div class="pink" style="left:1781px;top:1px;width:65px;height:63px"></div>

<!-- footer -->
<div class="a" style="left:0;top:822px;width:1858px;height:51px;background:#e2e2e2"></div>
<div id="foot" class="a" style="box-shadow:inset 0 -1px 0 #e6e6e6"></div>
<div class="ft" style="left:16px">© 2026. All Rights Reserved</div>
<div class="ft" style="left:246px">|</div>
<div class="ft" style="left:261.5px">Privacy Policy</div>
<div class="ft" style="left:378px">|</div>
<div class="ft" style="left:392px">Terms of Use</div>
<div class="a" style="left:1626px;top:834px;width:45px;height:30px;border:2px solid #7cb342;border-radius:3px"></div>
<div class="t" style="left:1626px;top:841.5px;width:45px;text-align:center;font-size:15.5px;line-height:15.5px;font-weight:400;-webkit-text-stroke:0.5px #86b33e;color:#86b33e">QA</div>
<div class="a" style="left:1680.5px;top:834px;width:1.5px;height:31px;background:#b0b0b0"></div>
<div class="a" style="left:1734.5px;top:834px;width:1.5px;height:31px;background:#b0b0b0"></div>
<div class="a" style="left:1788px;top:834px;width:1.5px;height:31px;background:#b0b0b0"></div>
<svg class="a" style="left:1695px;top:836px" width="26" height="26" viewBox="0 0 26 26">
<circle cx="13" cy="13" r="12.6" fill="#1a73e8"/>
<circle cx="13" cy="9" r="3.4" fill="#fff"/>
<ellipse cx="13" cy="18.4" rx="7.2" ry="3.8" fill="#fff"/>
</svg>
<svg class="a" style="left:1748px;top:835px" width="28" height="28" viewBox="0 0 28 28" fill="none" stroke="#7cb342" stroke-width="2.4">
<path d="M23 9.5A11.5 11.5 0 1 1 18.5 4.1"/>
<path d="M9.2 13.8l4.2 4.2L25 5.6" stroke-width="2.8"/>
</svg>
<svg class="a" style="left:1801px;top:837px" width="30" height="24" viewBox="0 0 30 24" fill="#7cb342">
<path d="M15 22.6l-3.8-3.8a5.4 5.4 0 0 1 7.6 0z"/>
<path d="M6.6 14.2l2.7 2.7a8.2 8.2 0 0 1 11.4 0l2.7-2.7a12 12 0 0 0-16.8 0z"/>
<path d="M1.5 9.1l2.7 2.7a15.4 15.4 0 0 1 21.6 0l2.7-2.7a19.2 19.2 0 0 0-27 0z"/>
</svg>

<!-- menu -->
<div id="menu" class="a"></div>
<div class="a" style="left:1566px;top:97px;width:42px;height:17px;border-radius:8.5px;background:#a8a8a8"></div>
<div class="a" style="left:1563px;top:93px;width:24px;height:24px;border-radius:50%;background:#fafafa;box-shadow:0 2px 1px -1px rgba(0,0,0,.2),0 1px 1px 0 rgba(0,0,0,.14),0 1px 3px 0 rgba(0,0,0,.12)"></div>
<div class="mi" style="left:1619px;top:95.8px;letter-spacing:-0.115px">Dark Mode</div>
<div class="a" style="left:1545px;top:139px;width:300px;height:1px;background:#dcdcdc"></div>
<svg class="a" style="left:1563.8px;top:151.8px" width="31" height="31" viewBox="0 0 24 24"><path fill="#111" d="M12 12c2.21 0 4-1.79 4-4s-1.79-4-4-4-4 1.79-4 4 1.79 4 4 4zm0 2c-2.67 0-8 1.34-8 4v2h16v-2c0-2.66-5.33-4-8-4z"/></svg>
<div class="mi" style="left:1600px;top:156.8px;letter-spacing:0.098px">My Profile</div>
<svg class="a" style="left:1567px;top:208px" width="25" height="25" viewBox="0 0 25 25">
<rect x="1" y="1" width="23" height="23" rx="2.5" fill="#111"/>
<g transform="translate(12.5 12.5) scale(0.87) translate(-12 -12)"><path fill="#fff" d="M19.14 12.94c.04-.3.06-.61.06-.94 0-.32-.02-.64-.07-.94l2.03-1.58a.49.49 0 0 0 .12-.61l-1.92-3.32a.488.488 0 0 0-.59-.22l-2.39.96c-.5-.38-1.03-.7-1.62-.94l-.36-2.54a.484.484 0 0 0-.48-.41h-3.84c-.24 0-.43.17-.47.41l-.36 2.54c-.59.24-1.13.57-1.62.94l-2.39-.96c-.22-.08-.47 0-.59.22L2.74 8.87c-.12.21-.08.47.12.61l2.03 1.58c-.05.3-.09.63-.09.94s.02.64.07.94l-2.03 1.58a.49.49 0 0 0-.12.61l1.92 3.32c.12.22.37.29.59.22l2.39-.96c.5.38 1.03.7 1.62.94l.36 2.54c.05.24.24.41.48.41h3.84c.24 0 .44-.17.47-.41l.36-2.54c.59-.24 1.13-.56 1.62-.94l2.39.96c.22.08.47 0 .59-.22l1.92-3.32c.12-.22.07-.47-.12-.61l-2.01-1.58zM12 15.6c-1.98 0-3.6-1.62-3.6-3.6s1.62-3.6 3.6-3.6 3.6 1.62 3.6 3.6-1.62 3.6-3.6 3.6z"/></g>
</svg>
<div class="mi" style="left:1600px;top:210.2px;letter-spacing:0.305px">Administrator</div>
<svg class="a" style="left:1563px;top:258px" width="34" height="28" viewBox="0 0 34 28" fill="#111">
<circle cx="11.7" cy="10.2" r="5.6"/>
<path d="M1.4 24.6v-2.4c0-3.6 5-6.3 10.3-6.3s10.3 2.7 10.3 6.3v2.4z"/>
<path d="M19.3 4.8c1.5 1.3 2.4 3.2 2.4 5.4s-.9 4.1-2.4 5.4" stroke="#111" stroke-width="2.2" fill="none"/>
<path d="M22.6 17.2c1.4 1.2 2.2 2.9 2.2 5v2.4" stroke="#111" stroke-width="2.2" fill="none"/>
<path d="M24.6 10.8h6.4M27.8 7.6v6.4" stroke="#111" stroke-width="2.2" fill="none"/>
</svg>
<div class="mi" style="left:1600px;top:261.6px;letter-spacing:-0.226px">Invite a Teammate</div>
<div class="a" style="left:1545px;top:298px;width:300px;height:1px;background:#dcdcdc"></div>
<svg class="a" style="left:1566px;top:322px" width="27" height="26" viewBox="0 0 27 26" fill="none" stroke="#111" stroke-width="2.4">
<path d="M3 7.5V3h21v20.6H3v-4.6" stroke-linejoin="round"/>
<path d="M1.5 13.2h15.5M12.3 8.4l4.8 4.8-4.8 4.8"/>
</svg>
<div class="mi" style="left:1600px;top:323.8px;letter-spacing:-0.621px">Log Out</div>
<div class="pink" style="left:1540px;top:198px;width:304px;height:48.5px"></div>

<!-- scrollbar -->
<div class="a" style="left:1845px;top:74px;width:13px;height:748px;background:#d6dadd"></div>
<div class="a" style="left:1845px;top:74px;width:13px;height:64px;background:linear-gradient(90deg,#e6e6e6,#fbfbfb 40%,#fff)"></div>
<div class="a" style="left:1845px;top:138px;width:12px;height:517px;background:#8f9597"></div>
<div class="a" style="left:1857px;top:74px;width:1px;height:748px;background:#fff"></div>

</body></html>
